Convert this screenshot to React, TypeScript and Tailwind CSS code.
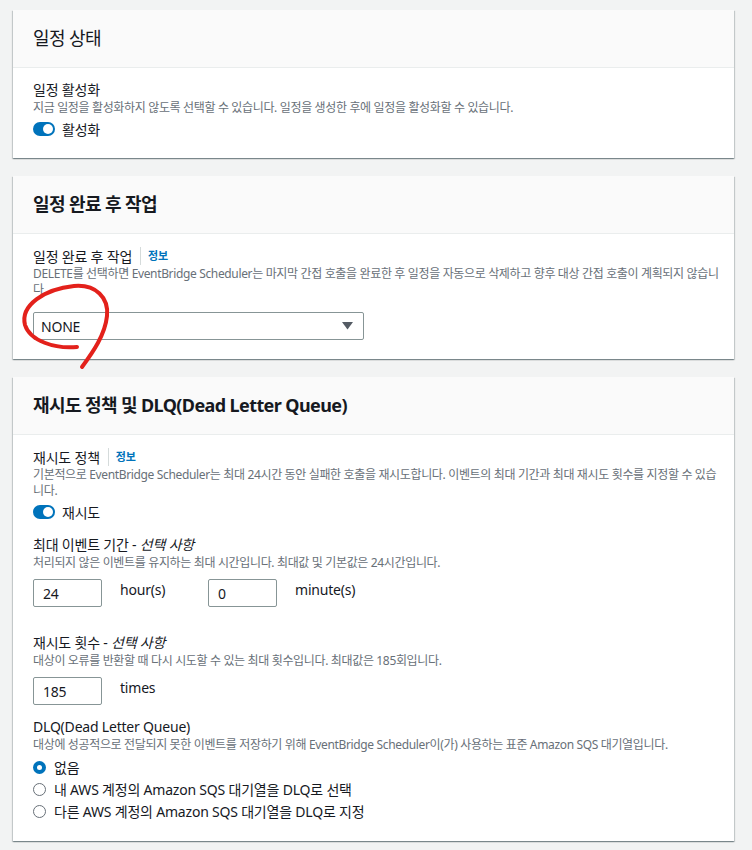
import React from 'react';

const Toggle = ({ label }: { label: string }) => (
  <div className="mt-[3px] flex h-5 items-center gap-[7px]">
    <span className="flex h-[14px] w-[22px] items-center justify-end rounded-full bg-[#0073bb] pr-[2px]">
      <span className="h-[10px] w-[10px] rounded-full bg-white" />
    </span>
    <span className="text-[14px] text-[#16191f]">{label}</span>
  </div>
);

const Info = () => (
  <span className="ml-2 flex items-center">
    <span className="h-[18px] w-px bg-[#d5dbdb]" />
    <span className="ml-[7px] text-[11px] font-bold text-[#0073bb]">정보</span>
  </span>
);

const Card = ({ title, weight, children }: { title: string; weight: string; children: React.ReactNode }) => (
  <div className="bg-white shadow-[0_1px_1px_0_rgba(0,28,36,0.3),1px_1px_1px_0_rgba(0,28,36,0.15),-1px_1px_1px_0_rgba(0,28,36,0.15)]">
    <div className="flex h-[58px] items-center border-b border-[#eaeded] bg-[#fafafa] px-5">
      <h2 className={`text-[18px] tracking-[-0.6px] text-[#16191f] ${weight}`}>{title}</h2>
    </div>
    <div className="px-5 pb-[19px]">{children}</div>
  </div>
);

const Desc = ({ children }: { children: React.ReactNode }) => (
  <div className="text-[12px] leading-4 tracking-[-0.35px] text-[#687078]">{children}</div>
);

const NumInput = ({ value }: { value: string }) => (
  <div className="flex h-7 w-[69px] items-center rounded-[2px] border border-[#879596] pl-[9px] text-[14px] text-[#16191f]">
    {value}
  </div>
);

const Radio = ({ label, checked }: { label: string; checked?: boolean }) => (
  <div className="flex h-[22px] items-center gap-[8px]">
    {checked ? (
      <span className="flex h-[13px] w-[13px] items-center justify-center rounded-full bg-[#0073bb]">
        <span className="h-[5px] w-[5px] rounded-full bg-white" />
      </span>
    ) : (
      <span className="h-[13px] w-[13px] rounded-full border border-[#687078] bg-white" />
    )}
    <span className="text-[14px] text-[#16191f]">{label}</span>
  </div>
);

export default function App() {
  return (
    <div className="relative min-h-[850px] bg-[#f2f3f3] pt-[10px] pl-[13px] pr-[18px] font-['Noto_Sans','Noto_Sans_CJK_KR',sans-serif] tracking-[-0.2px]">
      <div className="flex flex-col gap-[18px]">
        <Card title="일정 상태" weight="font-normal">
          <div className="pt-3">
            <div className="h-5 text-[14px] leading-5 text-[#16191f]">일정 활성화</div>
            <Desc>지금 일정을 활성화하지 않도록 선택할 수 있습니다. 일정을 생성한 후에 일정을 활성화할 수 있습니다.</Desc>
            <Toggle label="활성화" />
          </div>
        </Card>

        <Card title="일정 완료 후 작업" weight="font-semibold">
          <div className="pt-3">
            <div className="flex h-5 items-center text-[14px] text-[#16191f]">
              일정 완료 후 작업
              <Info />
            </div>
            <Desc>
              <span className="whitespace-nowrap">
                DELETE를 선택하면 EventBridge Scheduler는 마지막 간접 호출을 완료한 후 일정을 자동으로 삭제하고 향후 대상 간접 호출이 계획되지 않습니
              </span>
              <br />
              다.
            </Desc>
            <div className="mt-[14px] flex h-7 w-[331px] items-center justify-between rounded-[2px] border border-[#879596] pl-[7px] pr-[10px] text-[14px] text-[#16191f]">
              <span>NONE</span>
              <svg width="11" height="8" viewBox="0 0 11 8">
                <path d="M0 0 L11 0 L5.5 7.5 Z" fill="#545b64" />
              </svg>
            </div>
          </div>
        </Card>

        <Card title="재시도 정책 및 DLQ(Dead Letter Queue)" weight="font-bold">
          <div className="pt-3">
            <div className="flex h-5 items-center text-[14px] text-[#16191f]">
              재시도 정책
              <Info />
            </div>
            <Desc>
              <span className="whitespace-nowrap">
                기본적으로 EventBridge Scheduler는 최대 24시간 동안 실패한 호출을 재시도합니다. 이벤트의 최대 기간과 최대 재시도 횟수를 지정할 수 있습
              </span>
              <br />
              니다.
            </Desc>
            <Toggle label="재시도" />

            <div className="mt-[13px] h-5 text-[14px] leading-5 text-[#16191f]">
              최대 이벤트 기간 - <i>선택 사항</i>
            </div>
            <Desc>처리되지 않은 이벤트를 유지하는 최대 시간입니다. 최대값 및 기본값은 24시간입니다.</Desc>
            <div className="mt-2 flex">
              <div className="flex w-[175px] items-start gap-[18px]">
                <NumInput value="24" />
                <span className="text-[14px] text-[#16191f]">hour(s)</span>
              </div>
              <div className="flex w-[175px] items-start gap-[18px]">
                <NumInput value="0" />
                <span className="text-[14px] text-[#16191f]">minute(s)</span>
              </div>
            </div>

            <div className="mt-[26px] h-5 text-[14px] leading-5 text-[#16191f]">
              재시도 횟수 - <i>선택 사항</i>
            </div>
            <Desc>대상이 오류를 반환할 때 다시 시도할 수 있는 최대 횟수입니다. 최대값은 185회입니다.</Desc>
            <div className="mt-2 flex items-start gap-[18px]">
              <NumInput value="185" />
              <span className="text-[14px] text-[#16191f]">times</span>
            </div>

            <div className="mt-[12px] h-5 text-[14px] leading-5 text-[#16191f]">DLQ(Dead Letter Queue)</div>
            <Desc>
              대상에 성공적으로 전달되지 못한 이벤트를 저장하기 위해 EventBridge Scheduler이(가) 사용하는 표준 Amazon SQS 대기열입니다.
            </Desc>
            <div className="mt-[3px] flex flex-col">
              <Radio label="없음" checked />
              <Radio label="내 AWS 계정의 Amazon SQS 대기열을 DLQ로 선택" />
              <Radio label="다른 AWS 계정의 Amazon SQS 대기열을 DLQ로 지정" />
            </div>
          </div>
        </Card>
      </div>

      <svg className="pointer-events-none absolute left-0 top-0" width="752" height="850">
        <path
          d="M77 347 C55 349 30 341 25 325 C20 305 45 289 74 286 C96 284 109 298 107 316 C105 335 93 352 82 367"
          fill="none"
          stroke="#e3211b"
          strokeWidth="4"
          strokeLinecap="round"
        />
      </svg>
    </div>
  );
}
